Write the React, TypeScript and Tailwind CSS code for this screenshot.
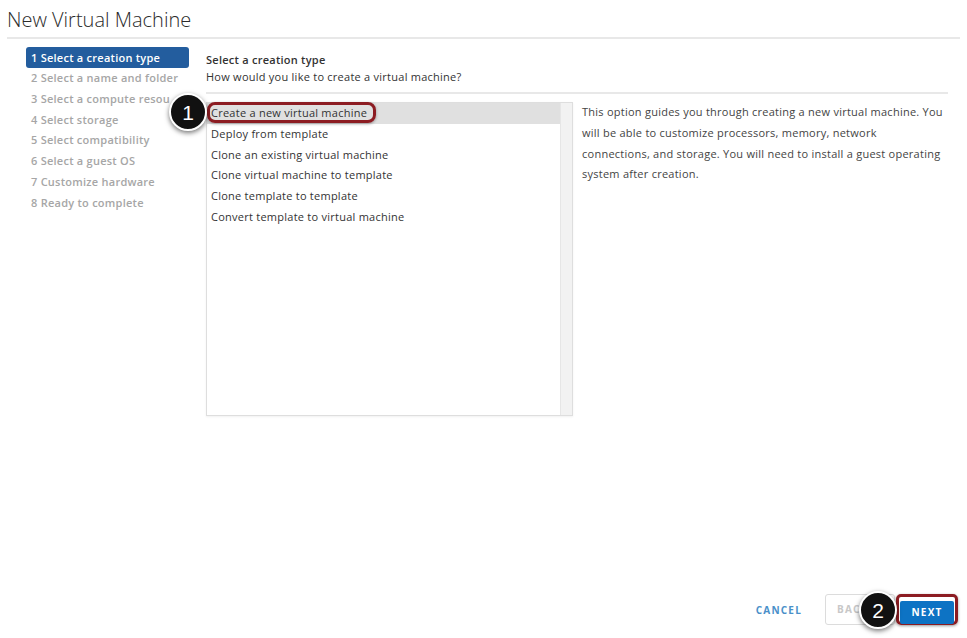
import React from "react";

const steps = [
  "1 Select a creation type",
  "2 Select a name and folder",
  "3 Select a compute resou",
  "4 Select storage",
  "5 Select compatibility",
  "6 Select a guest OS",
  "7 Customize hardware",
  "8 Ready to complete",
];

const items = [
  "Create a new virtual machine",
  "Deploy from template",
  "Clone an existing virtual machine",
  "Clone virtual machine to template",
  "Clone template to template",
  "Convert template to virtual machine",
];

function Callout({ n, className }: { n: string; className: string }) {
  return (
    <div
      className={
        "absolute w-[38px] h-[38px] rounded-full bg-[#111] border-2 border-white shadow-[0_2px_5px_rgba(0,0,0,0.55)] flex items-center justify-center text-white text-[21px] leading-none font-['Liberation_Sans',Arial,sans-serif] " +
        className
      }
    >
      {n}
    </div>
  );
}

export default function App() {
  return (
    <div className="relative w-[967px] h-[638px] bg-white overflow-hidden flex flex-col font-['Open_Sans',sans-serif] text-[#333]">
      {/* Header */}
      <div className="mx-[7px] h-[39px] border-b-2 border-[#e8e8e8] flex items-start pt-[8px]">
        <h1 className="text-[20px] leading-[24px] font-light text-[#2b2b2b]">
          New Virtual Machine
        </h1>
      </div>

      {/* Body */}
      <div className="flex flex-row pt-[8px] pl-[26px]">
        {/* Steps nav */}
        <div className="w-[163px] flex flex-col">
          {steps.map((s, i) =>
            i === 0 ? (
              <div
                key={s}
                className="h-[21px] rounded-[3px] bg-[#235d9e] text-white font-semibold text-[11px] tracking-[0.25px] leading-[21px] pl-[5px] whitespace-nowrap"
              >
                {s}
              </div>
            ) : (
              <div
                key={s}
                className="h-[20.8px] text-[#a6a6a6] font-semibold text-[11px] tracking-[0.25px] leading-[20.8px] pl-[5px] whitespace-nowrap overflow-hidden"
              >
                {s}
              </div>
            )
          )}
        </div>

        {/* Content */}
        <div className="ml-[17px] w-[742px] flex flex-col tracking-[0.25px]">
          <div className="pt-[5px] text-[11px] leading-[16px] font-semibold text-[#333]">
            Select a creation type
          </div>
          <div className="text-[11px] leading-[17px] text-[#333]">
            How would you like to create a virtual machine?
          </div>
          <div className="mt-[7px] border-b-2 border-[#e8e8e8]" />
          <div className="mt-[8px] flex flex-row">
            <div className="w-[367px] h-[314px] border border-[#dedede] shadow-[0_1px_2px_rgba(0,0,0,0.06)] flex flex-row">
              <div className="flex-1 flex flex-col">
                {items.map((t, i) => (
                  <div
                    key={t}
                    className={
                      "h-[20.8px] pl-[4px] text-[11px] leading-[20.8px] text-[#333] whitespace-nowrap " +
                      (i === 0 ? "bg-[#e0e0e0]" : "")
                    }
                  >
                    {t}
                  </div>
                ))}
              </div>
              <div className="w-[12px] bg-[#f2f2f2] border-l border-[#e6e6e6]" />
            </div>
            <div className="ml-[9px] w-[363px] text-[11px] leading-[20.8px] text-[#444]">
              This option guides you through creating a new virtual machine. You will be able to customize processors, memory, network connections, and storage. You will need to install a guest operating system after creation.
            </div>
          </div>
        </div>
      </div>

      <div className="flex-1" />

      {/* Footer */}
      <div className="h-[44px] flex flex-row items-start justify-end pr-[9px] pb-[12px]">
        <button className="mt-[9px] mr-[23px] text-[10px] leading-[14px] font-bold tracking-[1.2px] text-[#4a90c9]">
          CANCEL
        </button>
        <button className="w-[70px] h-[31px] border border-[#dcdcdc] rounded-[3px] text-[10px] font-bold tracking-[1.2px] text-[#c8c8c8] text-left pl-[11px]">
          BACK
        </button>
        <div className="ml-[1px] w-[62px] h-[31px] rounded-[5px] border-[3px] border-[#8c1c22] shadow-[0_1px_3px_rgba(0,0,0,0.4)] p-[1px]">
          <button className="w-full h-full rounded-[2px] bg-[#0d73c4] text-white text-[10px] font-bold tracking-[1.2px]">
            NEXT
          </button>
        </div>
      </div>

      {/* Overlays */}
      <div className="absolute left-[207px] top-[102px] w-[169px] h-[21px] rounded-[8px] border-[3px] border-[#8c1c22] shadow-[0_1px_3px_rgba(0,0,0,0.35)]" />
      <Callout n="1" className="left-[169px] top-[93px]" />
      <Callout n="2" className="left-[859px] top-[591px]" />
    </div>
  );
}
